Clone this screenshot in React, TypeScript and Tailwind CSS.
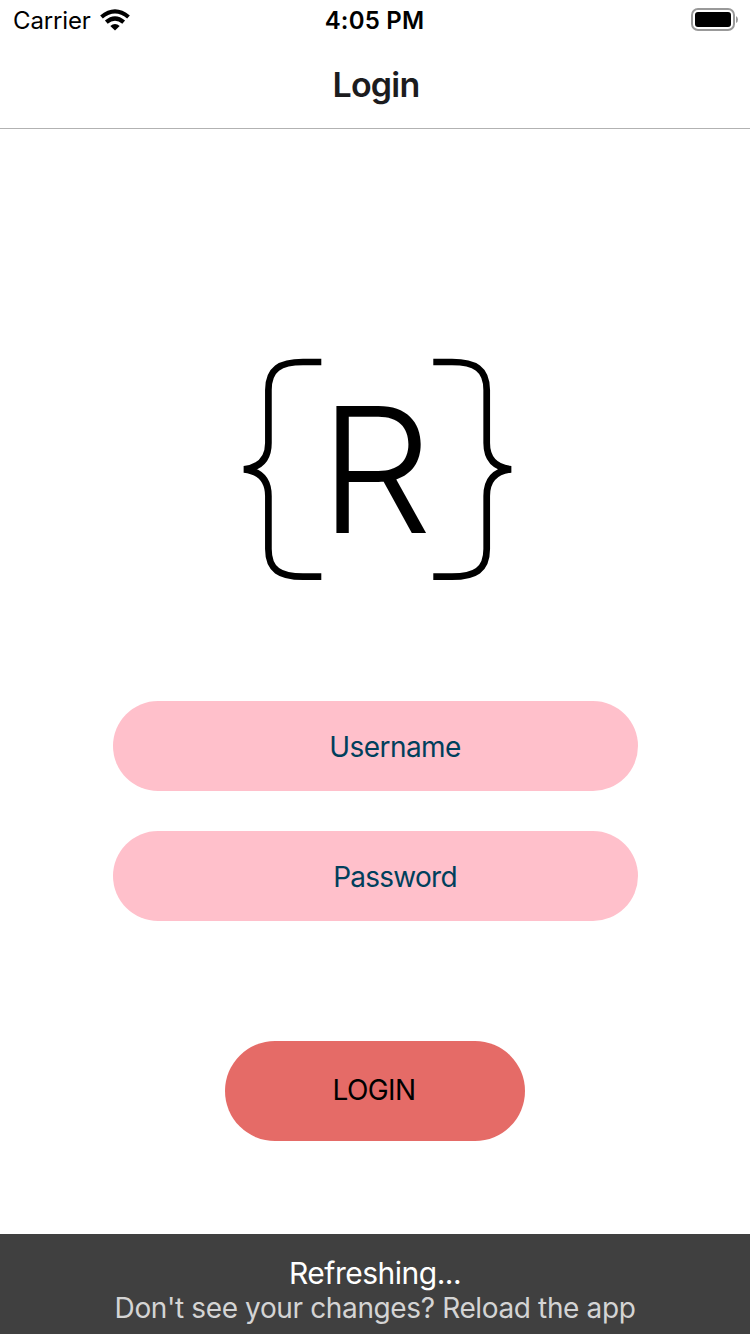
function StatusBar() {
  return (
    <div className="grid h-10 grid-cols-3 items-center pr-[11px] pl-[13px] text-black">
      <div className="flex items-center gap-[9px]">
        <span className="pt-0.5 text-[24px] leading-[38px] tracking-[-0.15px]">Carrier</span>
        <svg className="h-[22px] w-[30px]" viewBox="0 0 30 22" aria-hidden="true">
          <g fill="none" stroke="#000" strokeWidth="4.2">
            <path d="M1.5 8 Q15 -3.2 28.5 8" />
            <path d="M6.3 13.2 Q15 5.8 23.7 13.2" />
          </g>
          <path d="M10.3 17 Q15 13.2 19.7 17 L15 21.5 Z" />
        </svg>
      </div>
      <div className="pt-0.5 pr-[3px] text-center text-[24px] leading-[38px] font-semibold tracking-[0.2px] whitespace-nowrap">4:05 PM</div>
      <svg className="h-6 w-12 justify-self-end" viewBox="0 0 48 24" aria-hidden="true">
        <rect x="1" y="1" width="42" height="21" rx="6" fill="none" stroke="#999" strokeWidth="2" />
        <rect x="4" y="4" width="36" height="15" rx="3" />
        <path d="M45 8 Q47 9 47 11.5 Q47 14 45 15 Z" fill="#999" />
      </svg>
    </div>
  );
}

function Logo() {
  return (
    <svg className="h-[240px] w-[290px]" viewBox="230 350 290 240" role="img" aria-label="R">
      <g fill="none" stroke="#000" strokeWidth="6.7">
        <path d="M321.3 362 H303 C280 362 268.4 369 268.4 390 V443 C268.4 459 260 467.5 244 469.3 C260 471.1 268.4 480 268.4 496 V549 C268.4 570 280 576.7 303 576.7 H321.3" />
        <path d="M433.3 362 H452 C475 362 486.7 369 486.7 390 V443 C486.7 459 495 467.5 511 469.3 C495 471.1 486.7 480 486.7 496 V549 C486.7 570 475 576.7 452 576.7 H433.3" />
      </g>
      <text transform="translate(319.3 533) scale(1.02 1)" fontSize="175" fontWeight="300" fontFamily="Inter, sans-serif">R</text>
    </svg>
  );
}

export default function App() {
  return (
    <div className="flex h-[1334px] w-[750px] flex-col overflow-hidden bg-white font-['Inter',sans-serif]">
      <header className="h-[129px] border-b border-[#b2b2b2]">
        <StatusBar />
        <h1 className="pt-px pl-0.5 text-center text-[34px] leading-[88px] font-semibold tracking-[-0.8px] text-[#1c1c1e]">Login</h1>
      </header>
      <main className="flex flex-1 flex-col items-center pt-[221px]">
        <Logo />
        <input
          className="mt-[111px] h-[90px] w-[525px] shrink-0 rounded-full bg-[#ffc0cb] pt-px pl-10 text-center text-[28px] tracking-[-0.55px] text-[#003f5c] outline-none placeholder:text-[#003f5c]"
          placeholder="Username"
        />
        <input
          className="mt-10 h-[90px] w-[525px] shrink-0 rounded-full bg-[#ffc0cb] pt-px pl-10 text-center text-[28px] tracking-[-0.75px] text-[#003f5c] outline-none placeholder:text-[#003f5c]"
          placeholder="Password"
          type="password"
        />
        <button className="mt-[120px] h-[100px] w-[300px] shrink-0 rounded-full bg-[#e56b67] pr-0.5 pb-0.5 text-[28px] tracking-[-0.6px] text-black">LOGIN</button>
      </main>
      <footer className="h-[100px] bg-[#404040] pt-[21px] text-center whitespace-nowrap">
        <p className="text-[30px] leading-[36px] tracking-[-0.5px] text-white">Refreshing...</p>
        <p className="text-[28px] leading-[34px] tracking-[-0.37px] text-[#d4d4d4]">Don't see your changes? Reload the app</p>
      </footer>
    </div>
  );
}
